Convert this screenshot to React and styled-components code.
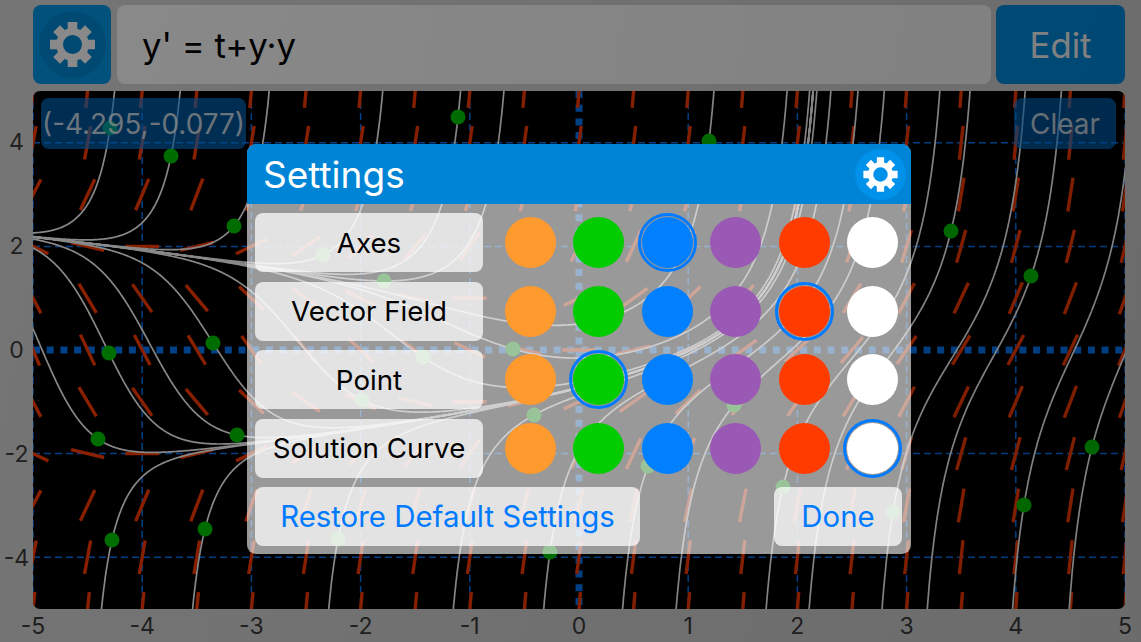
import styled, { createGlobalStyle } from 'styled-components'

const GlobalStyle = createGlobalStyle`
  html, body {
    margin: 0;
    padding: 0;
    background: #d8d8d8;
  }
  * {
    box-sizing: border-box;
  }
`

const FONT = `Inter, "Liberation Sans", sans-serif`

const Page = styled.div`
  position: relative;
  width: 1141px;
  height: 642px;
  overflow: hidden;
  padding: 5px 16px 0 0;
  display: grid;
  grid-template-columns: 33px 1fr;
  grid-template-rows: 79px 518px 40px;
  row-gap: 7px;
  background: #d8d8d8;
  font-family: ${FONT};
`

const TopBar = styled.div`
  grid-column: 2;
  display: flex;
  gap: 5px;
`

const GearButton = styled.div`
  width: 78px;
  border-radius: 8px;
  background: #0098e8;
  display: flex;
  align-items: center;
  justify-content: center;
`

const EquationBox = styled.div`
  flex: 1;
  margin-left: 1px;
  border-radius: 8px;
  background: #fff;
  display: flex;
  align-items: center;
  padding: 0 25px;
  color: #000;
  font-size: 34.8px;
`

const EditButton = styled.div`
  width: 129px;
  border-radius: 8px;
  background: #0090e6;
  color: #fff;
  font-size: 34.7px;
  display: flex;
  align-items: center;
  justify-content: center;
`

const YAxis = styled.div`
  grid-column: 1;
  grid-row: 2;
  display: flex;
  flex-direction: column;
  justify-content: space-between;
  padding: 50.5px 0 51.5px;
`

const YLabel = styled.div`
  height: 0;
  display: flex;
  align-items: center;
  justify-content: center;
  color: #3c3c3c;
  font-size: 23px;
`

const XAxis = styled.div`
  grid-column: 2;
  grid-row: 3;
  margin-top: -7px;
  height: 33px;
  display: flex;
  justify-content: space-between;
  align-items: center;
`

const XLabel = styled.div`
  width: 0;
  display: flex;
  justify-content: center;
  color: #3c3c3c;
  font-size: 23px;
`

const Plot = styled.div`
  grid-column: 2;
  grid-row: 2;
  position: relative;
  background: #000;
  border-radius: 7px;
  overflow: hidden;
`

const PlotCanvas = styled.svg`
  display: block;
  width: 1092px;
  height: 518px;
`

const FloatingTag = styled.div`
  position: absolute;
  top: 7px;
  height: 51px;
  border-radius: 8px;
  background: rgba(0, 140, 255, 0.6);
  color: rgba(255, 255, 255, 0.78);
  font-size: 27.9px;
  display: flex;
  align-items: center;
  justify-content: center;
  white-space: nowrap;
  ${(p) => (p.$right ? 'right: 9px; width: 102px;' : 'left: 8px; width: 205px;')}
`

const Scrim = styled.div`
  position: absolute;
  inset: 0;
  background: linear-gradient(100deg, rgba(0, 0, 0, 0.46), rgba(0, 0, 0, 0.5));
`

const Modal = styled.div`
  position: absolute;
  left: 247px;
  top: 144px;
  width: 664px;
  height: 410px;
  border-radius: 9px;
  overflow: hidden;
  display: flex;
  flex-direction: column;
  background: rgba(255, 255, 255, 0.6);
`

const ModalHeader = styled.div`
  height: 60px;
  flex: none;
  background: #0084d6;
  color: #fff;
  font-size: 37px;
  display: flex;
  align-items: center;
  justify-content: space-between;
  padding: 0 5px 0 16px;
`

const ModalBody = styled.div`
  flex: 1;
  display: flex;
  flex-direction: column;
  gap: 9.25px;
  padding: 9px 9px 8px 8px;
`

const SettingRow = styled.div`
  height: 59.25px;
  display: flex;
  align-items: center;
  justify-content: space-between;
`

const ModalButton = styled.div`
  height: 59.25px;
  width: ${(p) => p.$width}px;
  border-radius: 8px;
  background: rgba(255, 255, 255, 0.72);
  color: ${(p) => (p.$link ? '#007aff' : '#000')};
  font-size: ${(p) => (p.$link ? 29.4 : 27.7)}px;
  display: flex;
  align-items: center;
  justify-content: center;
  white-space: nowrap;
`

const Swatches = styled.div`
  display: flex;
  gap: 9.5px;
`

const Swatch = styled.div`
  width: 59px;
  height: 59px;
  border-radius: 50%;
  display: flex;
  align-items: center;
  justify-content: center;
  border: 3px solid ${(p) => (p.$selected ? '#007aff' : 'transparent')};
  &::after {
    content: '';
    width: 51px;
    height: 51px;
    flex: none;
    border-radius: 50%;
    background: ${(p) => p.$color};
  }
`

const SWATCHES = ['#ff9a2e', '#00cc00', '#007fff', '#9b59b6', '#ff3b00', '#ffffff']

const SETTINGS = [
  { label: 'Axes', selected: 2 },
  { label: 'Vector Field', selected: 4 },
  { label: 'Point', selected: 1 },
  { label: 'Solution Curve', selected: 5 }
]

// plot scale, in pixels of the 1092x518 canvas
const UNIT_X = 109.2
const UNIT_Y = 51.8
const toX = (t) => (t + 5) * UNIT_X
const toY = (y) => (5 - y) * UNIT_Y
const slope = (t, y) => t + y * y

// points as seen on the page
const POINTS = [
  [171, 156], [458, 117], [709, 141], [110, 128], [234, 226], [951, 231],
  [1031, 276], [109, 353], [213, 343], [98, 439], [237, 435], [1092, 447],
  [1024, 505], [205, 529], [112, 540], [323, 255], [384, 281], [513, 349],
  [423, 357], [534, 415], [362, 400], [734, 405], [648, 466], [783, 487],
  [893, 512], [550, 552], [338, 539]
].map(([x, y]) => [x - 33, y - 91])

function integrate(t0, y0, h) {
  const out = []
  let t = t0
  let y = y0
  while (t >= -5.05 && t <= 5.05 && Math.abs(y) < 7) {
    out.push(`${toX(t).toFixed(1)},${toY(y).toFixed(1)}`)
    const k1 = slope(t, y)
    const k2 = slope(t + h / 2, y + (h / 2) * k1)
    const k3 = slope(t + h / 2, y + (h / 2) * k2)
    const k4 = slope(t + h, y + h * k3)
    y += (h / 6) * (k1 + 2 * k2 + 2 * k3 + k4)
    t += h
  }
  return out
}

const CURVES = POINTS.map(([px, py]) => {
  const t = px / UNIT_X - 5
  const y = 5 - py / UNIT_Y
  return [...integrate(t, y, -0.005).reverse(), ...integrate(t, y, 0.005)].join(' ')
})

const FIELD = []
for (let i = 0; i <= 20; i++) {
  for (let j = -5; j <= 5; j++) {
    const t = -5 + i * 0.5
    const dx = UNIT_X
    const dy = -slope(t, j) * UNIT_Y
    const len = Math.hypot(dx, dy)
    FIELD.push({
      key: `${i}:${j}`,
      x1: toX(t) - (dx / len) * 17,
      y1: toY(j) - (dy / len) * 17,
      x2: toX(t) + (dx / len) * 17,
      y2: toY(j) + (dy / len) * 17
    })
  }
}

const GRID_X = [-5, -4, -3, -2, -1, 1, 2, 3, 4, 5]
const GRID_Y = [-4, -2, 2, 4]

function gearPath() {
  const R = 22.5
  const root = 16.5
  const w = 4.8
  const base = Math.sqrt(root * root - w * w)
  const corners = []
  for (let i = 0; i < 8; i++) {
    const a = (i * Math.PI) / 4
    const c = Math.cos(a)
    const s = Math.sin(a)
    ;[[base, -w], [R, -w], [R, w], [base, w]].forEach(([x, y]) => {
      corners.push(`${(x * c - y * s).toFixed(2)} ${(x * s + y * c).toFixed(2)}`)
    })
  }
  const hole = 9.5
  return `M${corners.join('L')}Z M${hole} 0A${hole} ${hole} 0 1 0 ${-hole} 0A${hole} ${hole} 0 1 0 ${hole} 0Z`
}

const GEAR = gearPath()

function GearIcon({ size, disc }) {
  return (
    <svg width={size} height={size} viewBox="-33.5 -33.5 67 67">
      <circle r="33.5" fill={disc} />
      <path d={GEAR} fill="#fff" fillRule="evenodd" />
    </svg>
  )
}

function PlotArea() {
  return (
    <PlotCanvas viewBox="0 0 1092 518">
      {GRID_X.map((t) => (
        <line key={t} x1={toX(t)} x2={toX(t)} y1="0" y2="518" stroke="#007aff" strokeWidth="1.5" strokeDasharray="7 4" />
      ))}
      {GRID_Y.map((y) => (
        <line key={y} x1="0" x2="1092" y1={toY(y)} y2={toY(y)} stroke="#007aff" strokeWidth="1.5" strokeDasharray="7 4" />
      ))}
      <line x1="0" x2="1092" y1={toY(0)} y2={toY(0)} stroke="#007aff" strokeWidth="7" strokeDasharray="7 6.7" />
      <line x1={toX(0)} x2={toX(0)} y1="0" y2="518" stroke="#007aff" strokeWidth="7" strokeDasharray="7 6.7" />
      {FIELD.map(({ key, ...line }) => (
        <line key={key} {...line} stroke="#ff3b00" strokeWidth="3.4" />
      ))}
      {CURVES.map((points, i) => (
        <polyline key={i} points={points} fill="none" stroke="#fff" strokeWidth="1.7" />
      ))}
      {POINTS.map(([x, y], i) => (
        <circle key={i} cx={x} cy={y} r="7.5" fill="#00cc00" />
      ))}
    </PlotCanvas>
  )
}

export default function App() {
  return (
    <>
      <GlobalStyle />
      <Page>
        <TopBar>
          <GearButton>
            <GearIcon size={67} disc="#0088d4" />
          </GearButton>
          <EquationBox>y' = t+y·y</EquationBox>
          <EditButton>Edit</EditButton>
        </TopBar>

        <YAxis>
          {['4', '2', '0', '-2', '-4'].map((n) => (
            <YLabel key={n}>{n}</YLabel>
          ))}
        </YAxis>

        <Plot>
          <PlotArea />
          <FloatingTag>(-4.295,-0.077)</FloatingTag>
          <FloatingTag $right>Clear</FloatingTag>
        </Plot>

        <XAxis>
          {['-5', '-4', '-3', '-2', '-1', '0', '1', '2', '3', '4', '5'].map((n) => (
            <XLabel key={n}>{n}</XLabel>
          ))}
        </XAxis>

        <Scrim />

        <Modal>
          <ModalHeader>
            Settings
            <GearIcon size={51} disc="#0092eb" />
          </ModalHeader>
          <ModalBody>
            {SETTINGS.map((row) => (
              <SettingRow key={row.label}>
                <ModalButton $width={228}>{row.label}</ModalButton>
                <Swatches>
                  {SWATCHES.map((color, i) => (
                    <Swatch key={color} $color={color} $selected={i === row.selected} />
                  ))}
                </Swatches>
              </SettingRow>
            ))}
            <SettingRow>
              <ModalButton $width={385} $link>Restore Default Settings</ModalButton>
              <ModalButton $width={128} $link>Done</ModalButton>
            </SettingRow>
          </ModalBody>
        </Modal>
      </Page>
    </>
  )
}
